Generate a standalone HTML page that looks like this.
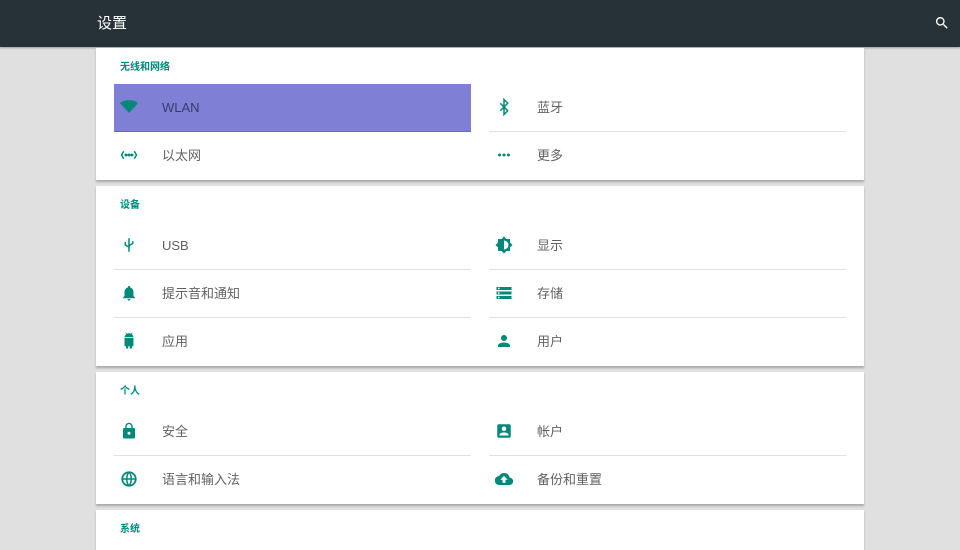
<!DOCTYPE html>
<html><head><meta charset="utf-8"><style>
*{margin:0;padding:0;box-sizing:border-box}
body{width:960px;height:540px;overflow:hidden;background:#e0e0e0;font-family:"Liberation Sans","Noto Sans CJK SC",sans-serif;position:relative}
.top{position:absolute;left:0;top:0;width:960px;height:47px;background:#263238;box-shadow:0 1px 2px rgba(0,0,0,.3)}
.top .t{position:absolute;left:97px;top:12px;color:#fff;font-size:15px}
.top svg{position:absolute;left:934px;top:15px}
.card{position:absolute;left:96px;width:768px;background:#fff;box-shadow:0 2px 2px rgba(0,0,0,.25)}
.lab{position:absolute;left:24px;font-size:10px;font-weight:bold;color:#00897b}
.it{position:absolute;height:48px;width:357px;border-bottom:1px solid #e0e0e0}
.it.nb{border-bottom:none}
.it.l{left:18px}.it.r{left:393px}
.it svg{position:absolute;left:6px;top:14px}
.it span{position:absolute;left:48px;top:13px;font-size:13px;color:#616161}
.it span.en{top:16px}
.sel{background:#7f7fd5;border-bottom:1px solid #6a6ab8}
.sel span{color:#3a3a6a}
</style></head><body>
<div class="top"><div class="t">设置</div>
<svg width="16" height="16" viewBox="0 0 24 24"><path fill="#fff" d="M15.5 14h-.8l-.3-.3A6.5 6.5 0 1 0 9.5 16a6.5 6.5 0 0 0 4.2-1.6l.3.3v.8l5 5 1.5-1.5-5-5zm-6 0A4.5 4.5 0 1 1 14 9.5 4.5 4.5 0 0 1 9.5 14z"/></svg></div>

<div class="card" style="top:48px;height:132px">
<div class="lab" style="top:10px">无线和网络</div>
<div class="it l sel" style="top:36px"><svg width="18" height="18" viewBox="0 0 24 24"><path fill="#00897b" d="M12 20L0 7c3-3 7-4 12-4s9 1 12 4z"/></svg><span class="en">WLAN</span></div>
<div class="it r" style="top:36px"><svg width="18" height="18" viewBox="0 0 24 24"><path fill="none" stroke="#00897b" stroke-width="2" d="M7 7l10 10-5 5V2l5 5L7 17"/></svg><span>蓝牙</span></div>
<div class="it l nb" style="top:84px"><svg width="18" height="18" viewBox="0 0 24 24"><path fill="none" stroke="#00897b" stroke-width="2" d="M5 7l-3 5 3 5M19 7l3 5-3 5"/><circle cx="8" cy="12" r="2" fill="#00897b"/><circle cx="12" cy="12" r="2" fill="#00897b"/><circle cx="16" cy="12" r="2" fill="#00897b"/></svg><span>以太网</span></div>
<div class="it r nb" style="top:84px"><svg width="18" height="18" viewBox="0 0 24 24"><circle cx="6" cy="12" r="2" fill="#00897b"/><circle cx="12" cy="12" r="2" fill="#00897b"/><circle cx="18" cy="12" r="2" fill="#00897b"/></svg><span>更多</span></div>
</div>

<div class="card" style="top:186px;height:180px">
<div class="lab" style="top:10px">设备</div>
<div class="it l" style="top:36px"><svg width="18" height="18" viewBox="0 0 24 24"><path fill="none" stroke="#00897b" stroke-width="2" d="M12 3v18M7 8v4l5 3M17 7v3l-5 3"/></svg><span class="en">USB</span></div>
<div class="it r" style="top:36px"><svg width="18" height="18" viewBox="0 0 24 24"><path fill="#00897b" d="M20 8.7V4h-4.7L12 .7 8.7 4H4v4.7L.7 12 4 15.3V20h4.7l3.3 3.3 3.3-3.3H20v-4.7l3.3-3.3zM12 18V6a6 6 0 0 1 0 12z"/></svg><span>显示</span></div>
<div class="it l" style="top:84px"><svg width="18" height="18" viewBox="0 0 24 24"><path fill="#00897b" d="M12 22a2 2 0 0 0 2-2h-4a2 2 0 0 0 2 2zm6-6v-5c0-3-1.6-5.6-4.5-6.3V4a1.5 1.5 0 0 0-3 0v.7C7.6 5.4 6 8 6 11v5l-2 2v1h16v-1z"/></svg><span>提示音和通知</span></div>
<div class="it r" style="top:84px"><svg width="18" height="18" viewBox="0 0 24 24"><path fill="#00897b" d="M2 20h20v-4H2zm2-3h2v2H4zM2 4v4h20V4zm4 3H4V5h2zm-4 7h20v-4H2zm2-3h2v2H4z"/></svg><span>存储</span></div>
<div class="it l nb" style="top:132px"><svg width="18" height="18" viewBox="0 0 24 24"><path fill="#00897b" d="M6 18a1 1 0 0 0 1 1h1v3h3v-3h2v3h3v-3h1a1 1 0 0 0 1-1V8H6zM15.5 2.8l1.3-1.3-.6-.6-1.5 1.5A6 6 0 0 0 12 1.7a6 6 0 0 0-2.7.7L7.8.9l-.6.6 1.3 1.3A6 6 0 0 0 6 7h12a6 6 0 0 0-2.5-4.2z"/></svg><span>应用</span></div>
<div class="it r nb" style="top:132px"><svg width="18" height="18" viewBox="0 0 24 24"><path fill="#00897b" d="M12 12a4 4 0 1 0-4-4 4 4 0 0 0 4 4zm0 2c-2.7 0-8 1.3-8 4v2h16v-2c0-2.7-5.3-4-8-4z"/></svg><span>用户</span></div>
</div>

<div class="card" style="top:372px;height:132px">
<div class="lab" style="top:10px">个人</div>
<div class="it l" style="top:36px"><svg width="18" height="18" viewBox="0 0 24 24"><path fill="#00897b" d="M18 8h-1V6A5 5 0 0 0 7 6v2H6a2 2 0 0 0-2 2v10a2 2 0 0 0 2 2h12a2 2 0 0 0 2-2V10a2 2 0 0 0-2-2zm-6 9a2 2 0 1 1 2-2 2 2 0 0 1-2 2zm3.1-9H8.9V6a3.1 3.1 0 0 1 6.2 0z"/></svg><span>安全</span></div>
<div class="it r" style="top:36px"><svg width="18" height="18" viewBox="0 0 24 24"><path fill="#00897b" d="M3 5v14a2 2 0 0 0 2 2h14a2 2 0 0 0 2-2V5a2 2 0 0 0-2-2H5a2 2 0 0 0-2 2zm12 4a3 3 0 1 1-3-3 3 3 0 0 1 3 3zm-9 8c0-2 4-3.1 6-3.1s6 1.1 6 3.1v1H6z"/></svg><span>帐户</span></div>
<div class="it l nb" style="top:84px"><svg width="18" height="18" viewBox="0 0 24 24"><circle cx="12" cy="12" r="9" fill="none" stroke="#00897b" stroke-width="2.4"/><path fill="none" stroke="#00897b" stroke-width="2" d="M3 12h18M12 3c-4 4-4 14 0 18M12 3c4 4 4 14 0 18"/></svg><span>语言和输入法</span></div>
<div class="it r nb" style="top:84px"><svg width="18" height="18" viewBox="0 0 24 24"><path fill="#00897b" d="M19.4 10A7.5 7.5 0 0 0 5.4 8 6 6 0 0 0 6 20h13a5 5 0 0 0 .4-10zM14 13v4h-4v-4H7l5-5 5 5z"/></svg><span>备份和重置</span></div>
</div>

<div class="card" style="top:510px;height:40px">
<div class="lab" style="top:10px">系统</div>
</div>
</body></html>
